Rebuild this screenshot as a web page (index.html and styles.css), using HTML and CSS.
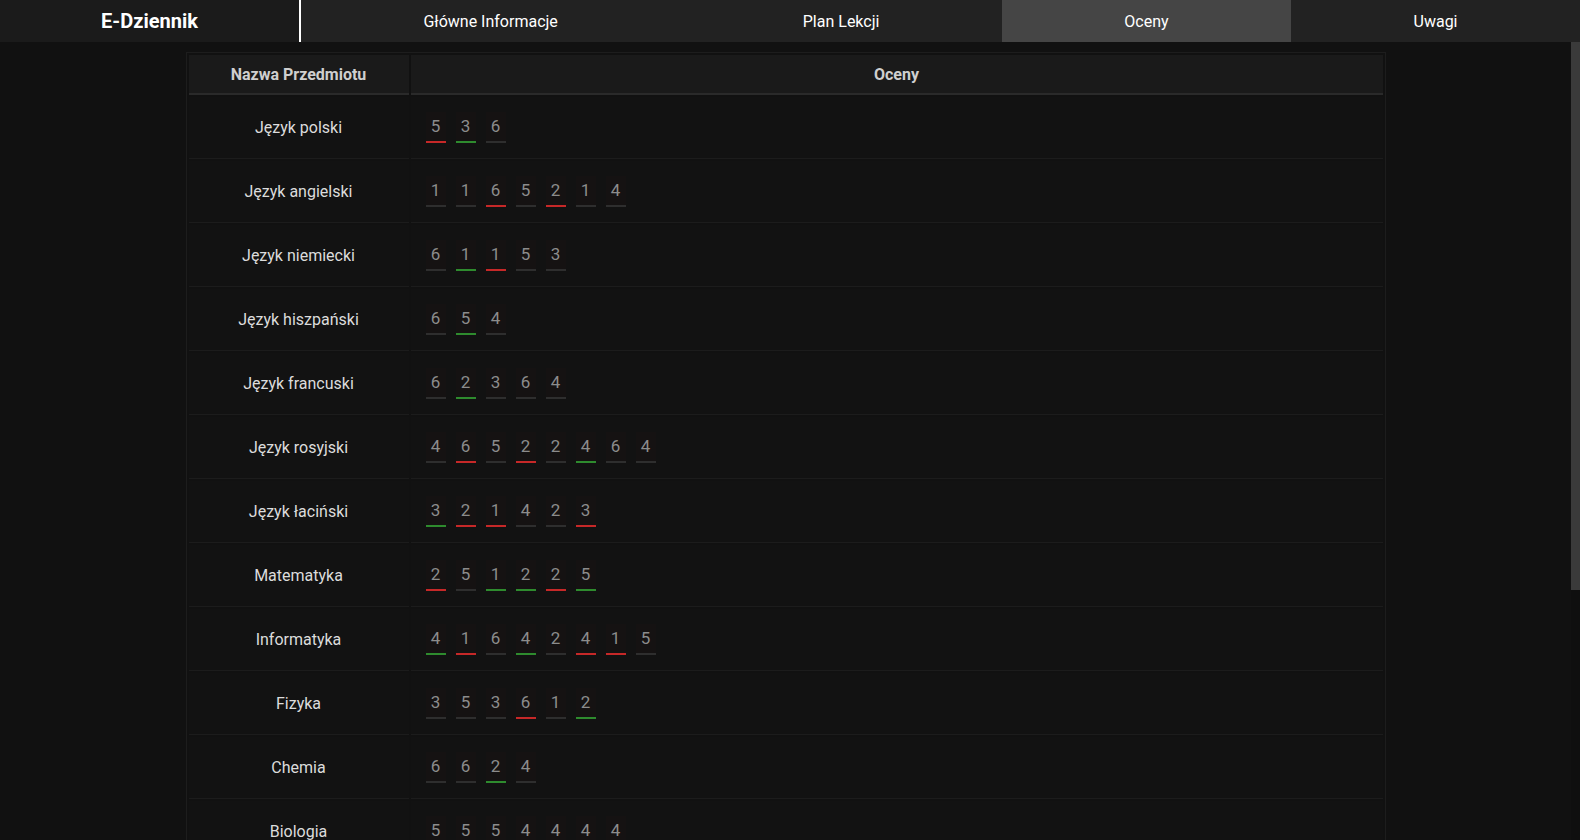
FILE: index.html
```html
<!DOCTYPE html>
<html lang="pl">
<head>
<meta charset="utf-8">
<title>E-Dziennik - Oceny</title>
<link rel="stylesheet" href="styles.css">
</head>
<body>
<nav class="nav">
  <div class="logo">E-Dziennik</div>
  <a class="tab" href="#">Główne Informacje</a>
  <a class="tab" href="#">Plan Lekcji</a>
  <a class="tab active" href="#">Oceny</a>
  <a class="tab" href="#">Uwagi</a>
</nav>
<div class="viewport">
<main class="main">
  <table class="grades">
    <thead>
      <tr><th class="col-subject">Nazwa Przedmiotu</th><th>Oceny</th></tr>
    </thead>
    <tbody>
      <tr><td class="subject">Język polski</td><td class="marks"><span class="g r">5</span><span class="g p">3</span><span class="g">6</span></td></tr>
      <tr><td class="subject">Język angielski</td><td class="marks"><span class="g">1</span><span class="g">1</span><span class="g r">6</span><span class="g">5</span><span class="g r">2</span><span class="g">1</span><span class="g">4</span></td></tr>
      <tr><td class="subject">Język niemiecki</td><td class="marks"><span class="g">6</span><span class="g p">1</span><span class="g r">1</span><span class="g">5</span><span class="g">3</span></td></tr>
      <tr><td class="subject">Język hiszpański</td><td class="marks"><span class="g">6</span><span class="g p">5</span><span class="g">4</span></td></tr>
      <tr><td class="subject">Język francuski</td><td class="marks"><span class="g">6</span><span class="g p">2</span><span class="g">3</span><span class="g">6</span><span class="g">4</span></td></tr>
      <tr><td class="subject">Język rosyjski</td><td class="marks"><span class="g">4</span><span class="g r">6</span><span class="g">5</span><span class="g r">2</span><span class="g">2</span><span class="g p">4</span><span class="g">6</span><span class="g">4</span></td></tr>
      <tr><td class="subject">Język łaciński</td><td class="marks"><span class="g p">3</span><span class="g r">2</span><span class="g r">1</span><span class="g">4</span><span class="g">2</span><span class="g r">3</span></td></tr>
      <tr><td class="subject">Matematyka</td><td class="marks"><span class="g r">2</span><span class="g">5</span><span class="g p">1</span><span class="g p">2</span><span class="g r">2</span><span class="g p">5</span></td></tr>
      <tr><td class="subject">Informatyka</td><td class="marks"><span class="g p">4</span><span class="g r">1</span><span class="g">6</span><span class="g p">4</span><span class="g">2</span><span class="g r">4</span><span class="g r">1</span><span class="g">5</span></td></tr>
      <tr><td class="subject">Fizyka</td><td class="marks"><span class="g">3</span><span class="g">5</span><span class="g">3</span><span class="g r">6</span><span class="g">1</span><span class="g p">2</span></td></tr>
      <tr><td class="subject">Chemia</td><td class="marks"><span class="g">6</span><span class="g">6</span><span class="g p">2</span><span class="g">4</span></td></tr>
      <tr><td class="subject">Biologia</td><td class="marks"><span class="g">5</span><span class="g">5</span><span class="g">5</span><span class="g">4</span><span class="g">4</span><span class="g">4</span><span class="g">4</span></td></tr>
      <tr><td class="subject">Geografia</td><td class="marks"><span class="g">4</span><span class="g p">5</span><span class="g">3</span><span class="g r">2</span></td></tr>
      <tr><td class="subject">Historia</td><td class="marks"><span class="g">3</span><span class="g r">2</span><span class="g">5</span><span class="g p">6</span><span class="g">4</span></td></tr>
      <tr><td class="subject">Wiedza o społeczeństwie</td><td class="marks"><span class="g">5</span><span class="g">4</span><span class="g p">6</span></td></tr>
      <tr><td class="subject">Plastyka</td><td class="marks"><span class="g p">6</span><span class="g">5</span><span class="g">5</span></td></tr>
      <tr><td class="subject">Wychowanie fizyczne</td><td class="marks"><span class="g">6</span><span class="g p">6</span><span class="g">5</span><span class="g">6</span></td></tr>
    </tbody>
  </table>
</main>
<div class="scrollbar"><div class="thumb"></div></div>
</div>
</body>
</html>
```
FILE: styles.css
```css
html, body {
  margin: 0;
  padding: 0;
  height: 100%;
}

body {
  display: flex;
  flex-direction: column;
  background: #111111;
  font-family: Roboto, "Liberation Sans", sans-serif;
  color: #dddddd;
  overflow: hidden;
}

.nav {
  display: flex;
  flex: 0 0 42px;
  height: 42px;
  background: #222222;
}

.logo {
  width: 299px;
  border-right: 2px solid #ffffff;
  background: #1b1b1b;
  color: #ffffff;
  font-size: 20px;
  font-weight: 700;
  display: flex;
  align-items: center;
  justify-content: center;
}

.tab {
  flex: 1 1 auto;
  display: flex;
  align-items: center;
  justify-content: center;
  color: #ffffff;
  text-decoration: none;
  font-size: 16px;
}

.tab.active {
  background: #454545;
}

.viewport {
  flex: 1 1 auto;
  min-height: 0;
  display: flex;
}

.main {
  flex: 1 1 auto;
  min-width: 0;
  overflow: hidden;
  background: #111111;
}

.scrollbar {
  flex: 0 0 9px;
  background: #0f0f0f;
}

.thumb {
  height: 548px;
  background: #3a3a3a;
}

.grades {
  width: 1200px;
  margin: 10px auto 16px;
  border: 1px solid #1d1d1d;
  border-spacing: 2px;
  background: #111111;
}

.grades th {
  height: 38px;
  padding: 0;
  background: #1a1a1a;
  border-bottom: 2px solid #2a2a2a;
  color: #cfcfcf;
  font-size: 16px;
  font-weight: 700;
  text-align: center;
}

.col-subject {
  width: 220px;
}

.grades td {
  height: 61px;
  padding: 0;
  background: #121212;
  border-bottom: 1px solid #1c1c1c;
}

.subject {
  text-align: center;
  font-size: 16px;
  color: #dcdcdc;
}

.marks {
  padding-left: 15px !important;
  text-align: left;
  font-size: 0;
}

.g {
  display: inline-block;
  vertical-align: middle;
  width: 20px;
  padding: 5px 0;
  margin-right: 10px;
  line-height: 19px;
  font-size: 17px;
  text-align: center;
  color: #8c8c8c;
  background: #151212;
  border-bottom: 2px solid #2e2e2e;
}

.g.r {
  border-bottom-color: #c62828;
}

.g.p {
  border-bottom-color: #2e8b2e;
}
```
